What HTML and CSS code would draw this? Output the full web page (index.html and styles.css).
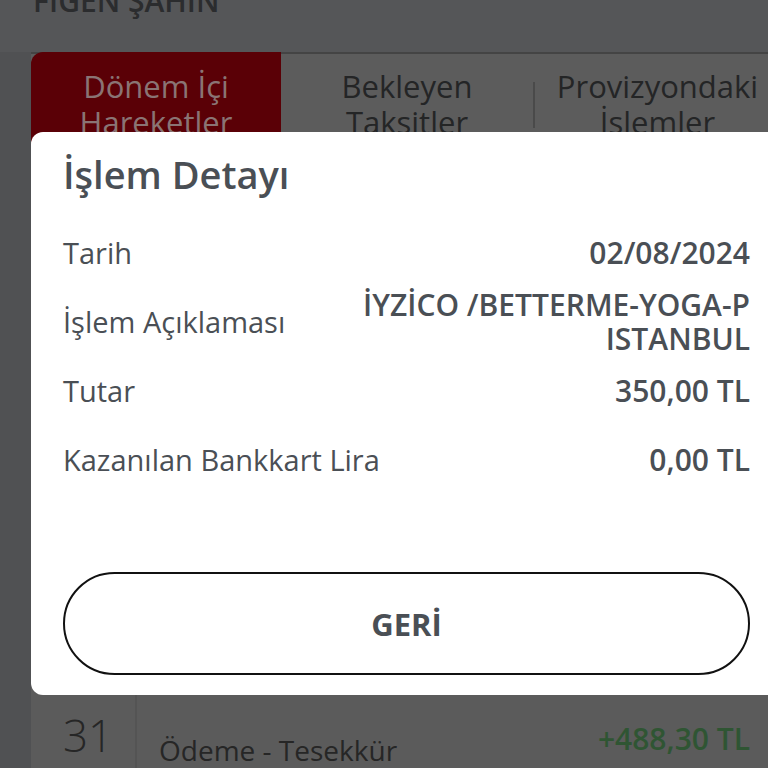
FILE: index.html
```html
<!DOCTYPE html>
<html lang="tr">
<head>
    <meta charset="UTF-8">
    <meta name="viewport" content="width=device-width, initial-scale=1.0">
    <title>İşlem Detayı</title>
    <link rel="stylesheet" href="styles.css">
</head>
<body>

<div class="screen">
    <div class="header">
        <div class="owner">FİGEN ŞAHİN</div>
    </div>

    <div class="tabs">
        <div class="tab active">Dönem İçi<br>Hareketler</div>
        <div class="tab">Bekleyen<br>Taksitler</div>
        <div class="tab-sep"></div>
        <div class="tab">Provizyondaki<br>İslemler</div>
    </div>

    <div class="tx-list">
        <div class="tx-row">
            <div class="tx-day">31</div>
            <div class="tx-desc">Ödeme - Tesekkür</div>
            <div class="tx-amount plus">+488,30 TL</div>
        </div>
    </div>
</div>

<div class="modal">
    <h2 class="modal-title">İşlem Detayı</h2>

    <div class="detail-list">
        <div class="detail-row">
            <div class="label">Tarih</div>
            <div class="value">02/08/2024</div>
        </div>
        <div class="detail-row">
            <div class="label">İşlem Açıklaması</div>
            <div class="value">İYZİCO /BETTERME-YOGA-P<br>ISTANBUL</div>
        </div>
        <div class="detail-row">
            <div class="label">Tutar</div>
            <div class="value">350,00 TL</div>
        </div>
        <div class="detail-row">
            <div class="label">Kazanılan Bankkart Lira</div>
            <div class="value">0,00 TL</div>
        </div>
    </div>

    <button class="back-button">GERİ</button>
</div>

</body>
</html>
```

FILE: styles.css
```css
html, body {
    margin: 0;
    height: 100%;
}
body {
    font-family: "Open Sans", Arial, sans-serif;
    background-color: #505153;
    overflow: hidden;
    position: relative;
}

/* dimmed page behind the popup */
.screen {
    height: 100%;
    display: flex;
    flex-direction: column;
}
.header {
    height: 55px;
    padding-left: 33px;
    background-color: #555658;
    overflow: hidden;
}
.owner {
    margin-top: -20px;
    font-size: 30px;
    font-weight: 600;
    color: #2b2c2e;
}
.tabs {
    display: flex;
    align-items: flex-start;
    margin-left: 31px;
    margin-right: -12px;
    height: 140px;
    background-color: #5c5c5c;
    border-top: 2px solid #444;
}
.tab {
    flex: 1;
    padding-top: 14px;
    text-align: center;
    font-size: 31px;
    font-weight: 500;
    line-height: 36px;
    color: #242526;
}
.tab.active {
    flex: 0 0 250px;
    height: 100%;
    margin-top: -2px;
    padding-top: 16px;
    background-color: #5a0006;
    border-radius: 12px 0 0 0;
    color: #8a7474;
}
.tab.active + .tab {
    flex: 0 0 252px;
}
.tab-sep {
    width: 2px;
    height: 46px;
    margin-top: 28px;
    background-color: #4a4a4a;
}
.tx-list {
    flex: 1;
    margin-left: 31px;
    margin-top: 500px;
    background-color: #5b5b5b;
}
.tx-row {
    display: flex;
    align-items: flex-start;
    height: 80px;
}
.tx-day {
    width: 106px;
    padding-left: 32px;
    padding-top: 17px;
    box-sizing: border-box;
    border-right: 2px solid #545454;
    height: 100%;
    font-size: 44px;
    font-weight: 300;
    color: #262626;
}
.tx-desc {
    flex: 1;
    padding-left: 22px;
    padding-top: 43px;
    font-size: 28px;
    color: #262626;
}
.tx-amount {
    padding-right: 18px;
    padding-top: 30px;
    font-size: 30px;
    font-weight: 600;
}
.plus {
    color: #2f5533;
}

/* popup */
.modal {
    position: absolute;
    top: 132px;
    left: 31px;
    right: -12px;
    height: 563px;
    box-sizing: border-box;
    padding: 16px 30px 20px 32px;
    background-color: white;
    border-radius: 12px;
    display: flex;
    flex-direction: column;
    color: #4a4f55;
}
.modal-title {
    margin: 0;
    height: 70px;
    font-size: 38px;
    font-weight: 600;
    line-height: 52px;
}
.detail-row {
    display: flex;
    justify-content: space-between;
    align-items: center;
    min-height: 69px;
}
.label {
    font-size: 29px;
    font-weight: 400;
}
.value {
    text-align: right;
    font-size: 30px;
    font-weight: 550;
    line-height: 34px;
}
.back-button {
    margin-top: auto;
    height: 103px;
    background-color: white;
    border: 2px solid #111;
    border-radius: 52px;
    font-family: inherit;
    font-size: 31px;
    font-weight: 700;
    color: #4a4f55;
}
```
